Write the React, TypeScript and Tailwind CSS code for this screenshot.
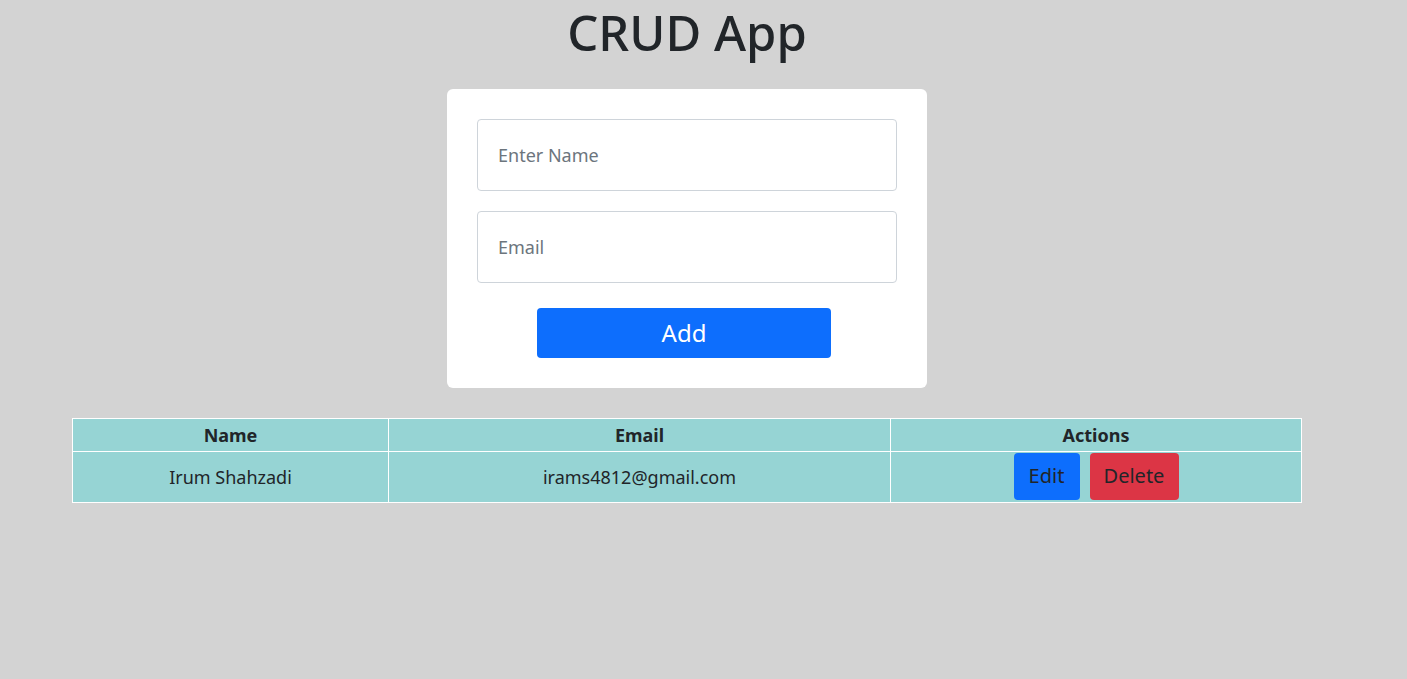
export default function App() {
  return (
    <div className="min-h-[679px] bg-[#d3d3d3] text-[#212529]" style={{ fontFamily: '"Noto Sans", "Open Sans", sans-serif' }}>
      <div className="w-[1374px]">
        <h1 className="text-center text-[49px] leading-[64px] font-medium">CRUD App</h1>
        <div className="mx-auto mt-[25px] w-[480px] rounded-[6px] bg-white p-[30px]">
          <input placeholder="Enter Name" className="block h-[72px] w-full rounded-[4px] border border-[#ced4da] px-[20px] text-[18px] placeholder:text-[#6c757d] outline-none" />
          <input placeholder="Email" className="mt-[20px] block h-[72px] w-full rounded-[4px] border border-[#ced4da] px-[20px] text-[18px] placeholder:text-[#6c757d] outline-none" />
          <button className="ml-[60px] mt-[25px] block h-[50px] w-[294px] rounded-[4px] bg-[#0d6efd] text-[24px] text-white">Add</button>
        </div>
        <table className="mx-auto mt-[30px] w-[1230px] border-collapse bg-[#96d4d4] text-[18px]">
          <thead>
            <tr className="h-[33px]">
              <th className="w-[316px] border border-white font-bold">Name</th>
              <th className="w-[502px] border border-white font-bold">Email</th>
              <th className="border border-white font-bold">Actions</th>
            </tr>
          </thead>
          <tbody>
            <tr className="h-[51px]">
              <td className="border border-white text-center">Irum Shahzadi</td>
              <td className="border border-white text-center">irams4812@gmail.com</td>
              <td className="border border-white pb-[2px] text-center">
                <div className="flex justify-center gap-[10px]">
                  <button className="h-[47px] w-[66px] rounded-[4px] bg-[#0d6efd] text-[20px] text-[#212529]">Edit</button>
                  <button className="h-[47px] w-[89px] rounded-[4px] bg-[#dc3545] text-[20px] text-[#212529]">Delete</button>
                </div>
              </td>
            </tr>
          </tbody>
        </table>
      </div>
    </div>
  );
}
